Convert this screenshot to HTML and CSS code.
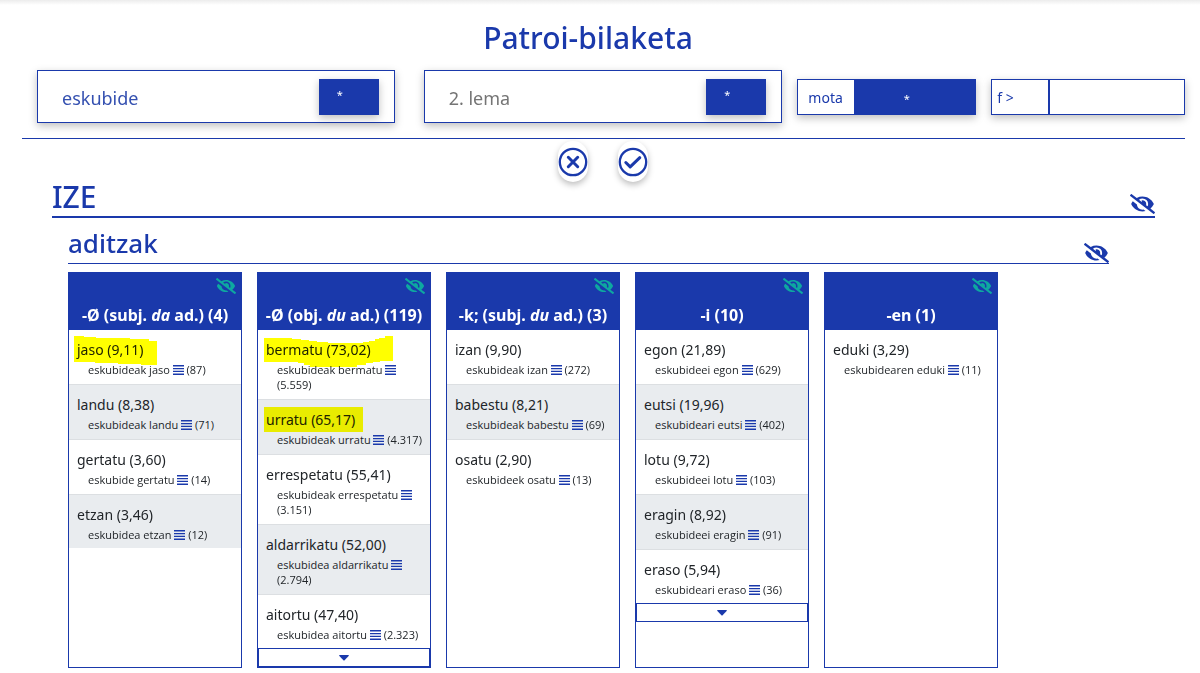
FILE: index.html
```html
<!DOCTYPE html>
<html lang="eu">
<head>
<meta charset="utf-8">
<title>Patroi-bilaketa</title>
<link rel="stylesheet" href="styles.css">
</head>
<body>
<svg class="defs" aria-hidden="true">
  <symbol id="eye-slash" viewBox="0 0 640 512"><path d="M320 400c-75.85 0-137.25-58.71-142.9-133.11L72.2 185.82c-13.79 17.3-26.48 35.59-36.72 55.59a32.35 32.35 0 0 0 0 29.19C89.71 376.41 197.07 448 320 448c26.91 0 52.87-4 77.89-10.46L346 397.39a144.13 144.13 0 0 1-26 2.61zm313.82 58.1l-110.55-85.44a331.25 331.25 0 0 0 81.25-102.07 32.35 32.35 0 0 0 0-29.19C550.29 135.59 442.93 64 320 64a308.15 308.15 0 0 0-147.32 37.7L45.46 3.37A16 16 0 0 0 23 6.18L3.37 31.45A16 16 0 0 0 6.18 53.9l588.36 454.73a16 16 0 0 0 22.46-2.81l19.64-25.27a16 16 0 0 0-2.82-22.45zm-183.72-142l-39.3-30.38A94.75 94.75 0 0 0 416 256a94.76 94.76 0 0 0-121.31-92.21A47.65 47.65 0 0 1 304 192a46.64 46.64 0 0 1-1.54 10l-73.61-56.89A142.31 142.31 0 0 1 320 112a143.92 143.92 0 0 1 144 144c0 21.63-5.29 41.79-13.9 60.11z"/></symbol>
  <symbol id="lines" viewBox="0 0 11 10"><path d="M0 0h11v1.4H0zM0 2.9h11v1.4H0zM0 5.7h11v1.4H0zM0 8.6h11V10H0z"/></symbol>
  <symbol id="caret" viewBox="0 0 10 6"><path d="M.6 0h8.8q.8.2.2.9L5.6 5.2q-.6.5-1.2 0L.4.9Q-.2.2.6 0z"/></symbol>
</svg>
<main>
  <h1 class="title">Patroi-bilaketa</h1>
  <form class="search">
    <div class="lemma">
      <input class="lemma-input" type="text" aria-label="1. lema" value="eskubide">
      <select class="lemma-kind" aria-label="1. lemaren kategoria"><option>*</option></select>
    </div>
    <div class="lemma lemma-second">
      <input class="lemma-input" type="text" aria-label="2. lema" placeholder="2. lema">
      <select class="lemma-kind" aria-label="2. lemaren kategoria"><option>*</option></select>
    </div>
    <div class="filter filter-type">
      <label for="mota">mota</label>
      <select id="mota"><option>*</option></select>
    </div>
    <div class="filter filter-freq">
      <label for="maiz">f &gt;</label>
      <input id="maiz" type="text">
    </div>
  </form>
  <div class="actions">
    <button class="round" type="button" aria-label="Garbitu"><svg viewBox="0 0 30 30"><circle cx="15" cy="15" r="13.2"/><path d="M10.3 10.3l9.4 9.4M19.7 10.3l-9.4 9.4"/></svg></button>
    <button class="round" type="button" aria-label="Bilatu"><svg viewBox="0 0 30 30"><circle cx="15" cy="15" r="13.2"/><path d="M7.8 15.5l4.4 4.4 9.6-9.2"/></svg></button>
  </div>

  <section>
    <div class="bar bar-main"><h2>IZE</h2><button class="eye" type="button" aria-label="Ezkutatu IZE"><svg><use href="#eye-slash"/></svg></button></div>
    <div class="bar bar-sub"><h3>aditzak</h3><button class="eye" type="button" aria-label="Ezkutatu aditzak"><svg><use href="#eye-slash"/></svg></button></div>
    <div class="columns">

      <article class="column">
        <header><button class="eye eye-small" type="button" aria-label="Ezkutatu"><svg><use href="#eye-slash"/></svg></button><h4>-Ø (subj. <i>da</i> ad.) (4)</h4></header>
        <ul>
          <li><svg class="marker" width="84" height="30" viewBox="0 0 84 30"><path d="M0 1h10v1h12v1h34v1h19v2h8v24H67v-1H44v-1H21v-1H0z"/></svg><p class="verb">jaso (9,11)</p><p class="use">eskubideak jaso <svg class="lines"><use href="#lines"/></svg> (87)</p></li>
          <li><p class="verb">landu (8,38)</p><p class="use">eskubideak landu <svg class="lines"><use href="#lines"/></svg> (71)</p></li>
          <li><p class="verb">gertatu (3,60)</p><p class="use">eskubide gertatu <svg class="lines"><use href="#lines"/></svg> (14)</p></li>
          <li><p class="verb">etzan (3,46)</p><p class="use">eskubidea etzan <svg class="lines"><use href="#lines"/></svg> (12)</p></li>
        </ul>
      </article>

      <article class="column">
        <header><button class="eye eye-small" type="button" aria-label="Ezkutatu"><svg><use href="#eye-slash"/></svg></button><h4>-Ø (obj. <i>du</i> ad.) (119)</h4></header>
        <ul>
          <li><svg class="marker" width="130" height="35" viewBox="0 0 130 35"><path d="M1 3h28v1h9v1h8v1h8v1h11v1h35V7h6V6h6V4h4V3h6V1h8v25h-13v1h-7v1h-7v2h-9v2H47v-2h-6v-2h-6v-1H1z"/></svg><p class="verb">bermatu (73,02)</p><p class="use">eskubideak bermatu <svg class="lines"><use href="#lines"/></svg> (5.559)</p></li>
          <li><svg class="marker" width="100" height="33" viewBox="0 0 100 33"><path d="M1 2h99v25H1z"/></svg><p class="verb">urratu (65,17)</p><p class="use">eskubideak urratu <svg class="lines"><use href="#lines"/></svg> (4.317)</p></li>
          <li><p class="verb">errespetatu (55,41)</p><p class="use">eskubideak errespetatu <svg class="lines"><use href="#lines"/></svg> (3.151)</p></li>
          <li><p class="verb">aldarrikatu (52,00)</p><p class="use">eskubidea aldarrikatu <svg class="lines"><use href="#lines"/></svg> (2.794)</p></li>
          <li><p class="verb">aitortu (47,40)</p><p class="use">eskubidea aitortu <svg class="lines"><use href="#lines"/></svg> (2.323)</p></li>
        </ul>
        <button class="more" type="button" aria-label="Gehiago"><svg><use href="#caret"/></svg></button>
      </article>

      <article class="column">
        <header><button class="eye eye-small" type="button" aria-label="Ezkutatu"><svg><use href="#eye-slash"/></svg></button><h4>-k; (subj. <i>du</i> ad.) (3)</h4></header>
        <ul>
          <li><p class="verb">izan (9,90)</p><p class="use">eskubideak izan <svg class="lines"><use href="#lines"/></svg> (272)</p></li>
          <li><p class="verb">babestu (8,21)</p><p class="use">eskubideak babestu <svg class="lines"><use href="#lines"/></svg> (69)</p></li>
          <li><p class="verb">osatu (2,90)</p><p class="use">eskubideek osatu <svg class="lines"><use href="#lines"/></svg> (13)</p></li>
        </ul>
      </article>

      <article class="column">
        <header><button class="eye eye-small" type="button" aria-label="Ezkutatu"><svg><use href="#eye-slash"/></svg></button><h4>-i (10)</h4></header>
        <ul>
          <li><p class="verb">egon (21,89)</p><p class="use">eskubideei egon <svg class="lines"><use href="#lines"/></svg> (629)</p></li>
          <li><p class="verb">eutsi (19,96)</p><p class="use">eskubideari eutsi <svg class="lines"><use href="#lines"/></svg> (402)</p></li>
          <li><p class="verb">lotu (9,72)</p><p class="use">eskubideei lotu <svg class="lines"><use href="#lines"/></svg> (103)</p></li>
          <li><p class="verb">eragin (8,92)</p><p class="use">eskubideei eragin <svg class="lines"><use href="#lines"/></svg> (91)</p></li>
          <li><p class="verb">eraso (5,94)</p><p class="use">eskubideari eraso <svg class="lines"><use href="#lines"/></svg> (36)</p></li>
        </ul>
        <button class="more" type="button" aria-label="Gehiago"><svg><use href="#caret"/></svg></button>
      </article>

      <article class="column">
        <header><button class="eye eye-small" type="button" aria-label="Ezkutatu"><svg><use href="#eye-slash"/></svg></button><h4>-en (1)</h4></header>
        <ul>
          <li><p class="verb">eduki (3,29)</p><p class="use">eskubidearen eduki <svg class="lines"><use href="#lines"/></svg> (11)</p></li>
        </ul>
      </article>
    </div>
  </section>
</main>
</body>
</html>
```
FILE: styles.css
```css
:root {
  --blue: #1a39ab;
  --shadow: 0 3px 8px rgba(0, 0, 0, .25);
}
* { box-sizing: border-box; }
body {
  margin: 0;
  background: linear-gradient(#ececec, #fff 5px) no-repeat #fff;
  color: #212529;
  font-family: "Noto Sans", "Open Sans", sans-serif;
}
h1, h2, h3, h4, p, ul { margin: 0; padding: 0; }
ul { list-style: none; }
button, select, input { font-family: inherit; border-radius: 0; margin: 0; }
button { display: block; padding: 0; border: 0; background: none; color: inherit; cursor: pointer; }
select { appearance: none; border: 0; background: var(--blue); color: #fff; }
svg { display: block; fill: currentColor; }
.defs { display: none; }

.title {
  padding-top: 18px;
  color: var(--blue);
  font-size: 30px;
  font-weight: 500;
  line-height: 40px;
  text-align: center;
  margin-right: 24px;
}

.search {
  display: grid;
  grid-template-columns: minmax(0, 358fr) minmax(0, 373fr) minmax(0, 179fr) minmax(0, 194fr);
  align-items: center;
  gap: 15px;
  margin: 12px 15px 0 22px;
  padding: 0 0 15px 15px;
  border-bottom: 1px solid var(--blue);
}
.lemma {
  display: flex;
  align-items: center;
  height: 53px;
  padding: 0 15px 0 24px;
  border: 1px solid var(--blue);
  box-shadow: var(--shadow);
}
.lemma-second { margin-left: 14px; }
.lemma-input {
  flex: 1;
  min-width: 0;
  padding: 3px 0 0;
  border: 0;
  background: none;
  color: #3450b0;
  font-size: 18px;
}
.lemma-input::placeholder { color: #757575; }
.lemma-kind {
  width: 60px;
  height: 36px;
  padding: 0 18px 4px;
  font-size: 11px;
  box-shadow: var(--shadow);
}
.filter {
  display: flex;
  height: 36px;
  border: 1px solid var(--blue);
  box-shadow: var(--shadow);
  color: var(--blue);
  font-size: 14px;
  line-height: 36px;
}
.filter label { width: 56px; }
.filter-type label { padding-left: 10px; }
.filter-type select { flex: 1; min-width: 0; padding: 4px 16px 0 0; font-size: 11px; text-align: center; text-align-last: center; }
.filter-freq label { padding-left: 5px; }
.filter-freq input { flex: 1; min-width: 0; border: 0; border-left: 2px solid var(--blue); }

.actions { display: flex; justify-content: center; gap: 30px; padding: 2px 0 0 6px; }
.round {
  width: 30px;
  height: 41px;
  border-radius: 15px;
  background: #fff;
  box-shadow: 0 3px 6px rgba(0, 0, 0, .25);
}
.round svg { width: 30px; height: 30px; margin: auto; fill: none; stroke: var(--blue); stroke-width: 2.3; }
.round path { stroke-width: 3; stroke-linecap: round; stroke-linejoin: round; }

.bar { display: flex; justify-content: space-between; align-items: flex-end; color: var(--blue); }
.bar h2, .bar h3 { font-weight: 500; }
.bar-main { margin: 0 45px 0 52px; height: 36px; border-bottom: 2px solid var(--blue); }
.bar-main h2 { font-size: 30px; line-height: 38px; }
.bar-sub { margin: 6px 91px 0 68px; height: 40px; border-bottom: 1px solid var(--blue); }
.bar-sub h3 { font-size: 26px; line-height: 40px; }
.eye svg { width: 25px; height: 20px; }
.bar .eye { padding-bottom: 2px; }
.bar-sub .eye { padding-bottom: 0; }

.columns {
  display: grid;
  grid-template-columns: repeat(6, 1fr);
  gap: 15px;
  margin: 8px 13px 6px 68px;
}
.column { min-width: 0; border: 1px solid var(--blue); }
.column header { height: 57px; padding-top: 5px; background: var(--blue); color: #fff; }
.column h4 { font-size: 16px; font-weight: 700; line-height: 22px; text-align: center; white-space: nowrap; padding-top: 10px; }
.eye-small { margin: 0 5px 0 auto; color: #0ea8a0; }
.eye-small svg { width: 20px; height: 16px; }
.column li { position: relative; padding: 8px 8px 7px; border-bottom: 1px solid #dcdfe2; }
.column li:last-child { padding-bottom: 6px; border-bottom: 0; }
.column li:nth-child(even) { background: #e9ecef; }
.verb { font-size: 14px; line-height: 24px; }
.use { padding-left: 11px; font-family: "Open Sans", "Noto Sans", sans-serif; font-size: 11px; line-height: 15px; }
.lines { display: inline-block; width: 11px; height: 10px; color: var(--blue); vertical-align: -1px; }
.marker { position: absolute; left: 5px; top: 5px; color: #ff0; mix-blend-mode: multiply; }
.more { width: 100%; height: 19px; border: 1px solid var(--blue); color: var(--blue); }
.more svg { width: 10px; height: 6px; margin: auto; }
```
